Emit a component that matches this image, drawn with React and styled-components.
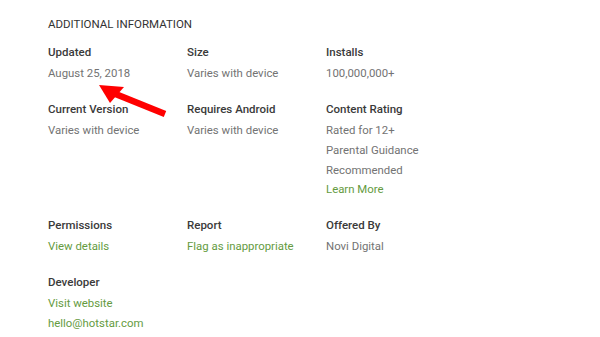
import React from "react";
import styled, { createGlobalStyle } from "styled-components";

const Global = createGlobalStyle`
  html, body { margin: 0; padding: 0; background: #fff; }
  body { font-family: Roboto, "Liberation Sans", Arial, sans-serif; }
`;

const Page = styled.div`
  position: relative;
  width: 600px;
  height: 337px;
  overflow: hidden;
  padding: 16px 0 0 48px;
  box-sizing: border-box;
`;

const Heading = styled.h2`
  margin: 0 0 10px 0;
  font-size: 11.5px;
  line-height: 16px;
  font-weight: 400;
  color: #333;
  text-transform: uppercase;
`;

const Grid = styled.div`
  display: grid;
  grid-template-columns: 139px 139px 139px;
  row-gap: 15.4px;
`;

const Cell = styled.div`
  display: flex;
  flex-direction: column;
`;

const Label = styled.div`
  font-size: 11.5px;
  line-height: 20px;
  font-weight: 500;
  color: #3a3a3a;
  margin-bottom: 2px;
`;

const Value = styled.div`
  font-size: 11.4px;
  line-height: 19.7px;
  color: ${(p) => (p.$link ? "#659b3f" : "#737373")};
`;

const Arrow = styled.svg`
  position: absolute;
  left: 0;
  top: 0;
  pointer-events: none;
`;

const data = [
  { label: "Updated", values: ["August 25, 2018"] },
  { label: "Size", values: ["Varies with device"] },
  { label: "Installs", values: ["100,000,000+"] },
  { label: "Current Version", values: ["Varies with device"] },
  { label: "Requires Android", values: ["Varies with device"] },
  {
    label: "Content Rating",
    values: ["Rated for 12+", "Parental Guidance", "Recommended", { t: "Learn More", link: true }],
  },
  { label: "Permissions", values: [{ t: "View details", link: true }] },
  { label: "Report", values: [{ t: "Flag as inappropriate", link: true }] },
  { label: "Offered By", values: ["Novi Digital"] },
  {
    label: "Developer",
    values: [
      { t: "Visit website", link: true },
      { t: "hello@hotstar.com", link: true },
    ],
  },
];

export default function App() {
  return (
    <>
      <Global />
      <Page>
        <Heading>Additional Information</Heading>
        <Grid>
          {data.map((c) => (
            <Cell key={c.label}>
              <Label>{c.label}</Label>
              {c.values.map((v, i) =>
                typeof v === "string" ? (
                  <Value key={i}>{v}</Value>
                ) : (
                  <Value key={i} $link>
                    {v.t}
                  </Value>
                )
              )}
            </Cell>
          ))}
        </Grid>
        <Arrow width="600" height="337" viewBox="0 0 600 337">
          <line x1="165" y1="114" x2="113" y2="93" stroke="#ff0000" strokeWidth="6.5" />
          <polygon points="99,85 124,87 110,103" fill="#ff0000" />
        </Arrow>
      </Page>
    </>
  );
}
